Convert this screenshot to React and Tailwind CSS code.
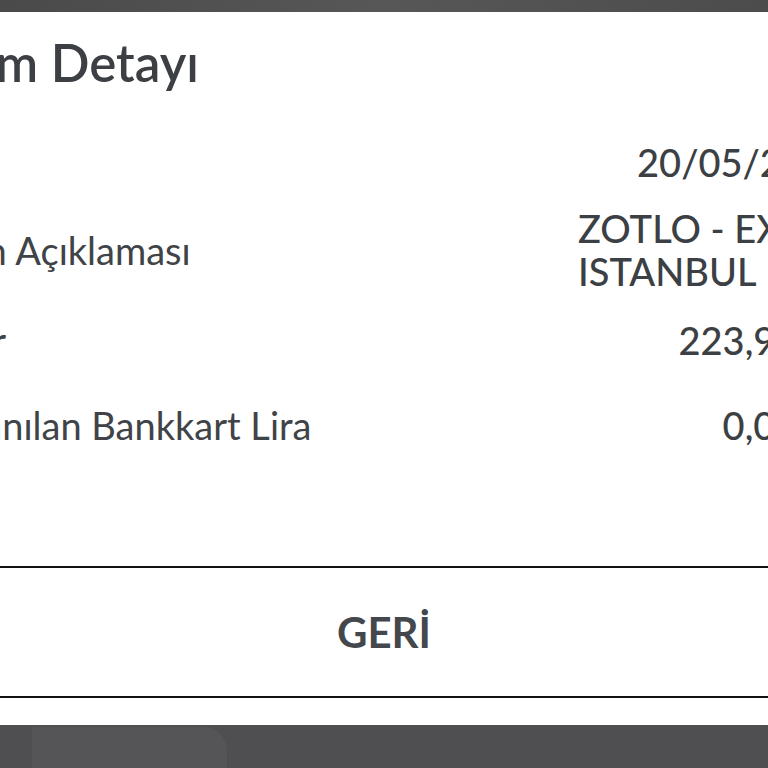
import React from 'react';

const rows = [
  { label: 'Tarih', value: ['20/05/2023'], mt: 'mt-[53px]' },
  { label: 'İşlem Açıklaması', value: ['ZOTLO - EXXEN', 'ISTANBUL'], mt: 'mt-[23px]', left: true },
  { label: 'Tutar', value: ['223,90 TL'], mt: 'mt-[26px]' },
  { label: 'Kullanılan Bankkart Lira', value: ['0,00 TL'], mt: 'mt-[42px]' },
];

export default function App() {
  return (
    <div className="w-[768px] h-[768px] overflow-hidden flex flex-col bg-white font-['Lato',sans-serif] text-[#3c3f43]">
      <div className="h-[12px] shrink-0 bg-gradient-to-r from-[#4a4a4a] via-[#575757] to-[#4c4c4c]" />

      <div className="h-[713px] shrink-0 flex flex-col">
        <div className="-ml-[80px] w-[928px] flex flex-col">
          <h1 className="mt-[25px] text-[51px] leading-none font-semibold">İşlem Detayı</h1>

          {rows.map((r) => (
            <div key={r.label} className={`flex items-center justify-between ${r.mt}`}>
              <div className="text-[38px] leading-[43px] font-normal text-[#404347]">{r.label}</div>
              <div className={`w-[270px] shrink-0 text-[38px] leading-[43px] font-medium whitespace-nowrap ${r.left ? 'text-left' : 'text-right'}`}>
                {r.value.map((v) => (
                  <div key={v}>{v}</div>
                ))}
              </div>
            </div>
          ))}
        </div>

        <div className="mt-auto mb-[27px] border-y-2 border-[#111] h-[132px] flex items-center justify-center">
          <span className="text-[42px] font-bold text-[#44474b] leading-none">GERİ</span>
        </div>
      </div>

      <div className="flex-1 bg-[#4f4f51] flex pt-[2px]">
        <div className="ml-[32px] w-[195px] bg-[#555557] rounded-tr-[24px]" />
      </div>
    </div>
  );
}
